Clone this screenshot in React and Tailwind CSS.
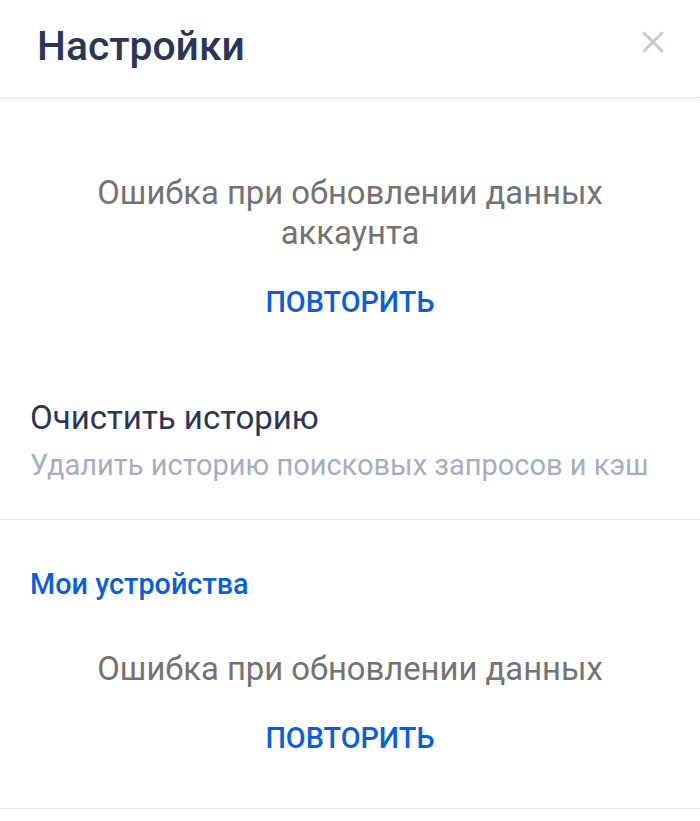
import { X } from 'lucide-react';

function ErrorBlock({ lines, className = '' }) {
  return (
    <div className={`flex flex-col items-center text-center ${className}`}>
      <p className="text-[32.8px] leading-[40px] text-[#737373] px-6">
        {lines.map((line, i) => (
          <span key={i} className="block">{line}</span>
        ))}
      </p>
      <button className="mt-[29px] text-[28.8px] leading-[40px] font-medium text-[#0b5fd6]">
        ПОВТОРИТЬ
      </button>
    </div>
  );
}

export default function App() {
  return (
    <div className="min-h-[821px] bg-white font-['Roboto','Noto_Sans',sans-serif]">
      <header className="h-[98px] flex items-center justify-between pl-[37px] pr-[29px] border-b border-[#e6e6e9] shadow-[0_2px_3px_rgba(0,0,0,0.06)]">
        <h1 className="text-[40.8px] font-medium text-[#2b3656] leading-none -mt-[4px]">Настройки</h1>
        <button className="text-[#c5cad8] -mt-[14px]">
          <X size={36} strokeWidth={2} />
        </button>
      </header>

      <ErrorBlock className="pt-[75px]" lines={['Ошибка при обновлении данных', 'аккаунта']} />

      <section className="mt-[76px] px-[30px] pb-[36px] border-b border-[#e8e9ee]">
        <div className="text-[33px] leading-[40px] text-[#2b3656]">Очистить историю</div>
        <div className="mt-[9px] text-[29px] leading-[36px] text-[#a6aec0] whitespace-nowrap">
          Удалить историю поисковых запросов и кэш
        </div>
      </section>

      <section className="pt-[46px] pb-[50px] border-b border-[#e8e9ee]">
        <h2 className="px-[30px] text-[28.8px] leading-[36px] font-medium text-[#0b5fd6]">Мои устройства</h2>
        <ErrorBlock className="pt-[47px]" lines={['Ошибка при обновлении данных']} />
      </section>
    </div>
  );
}
